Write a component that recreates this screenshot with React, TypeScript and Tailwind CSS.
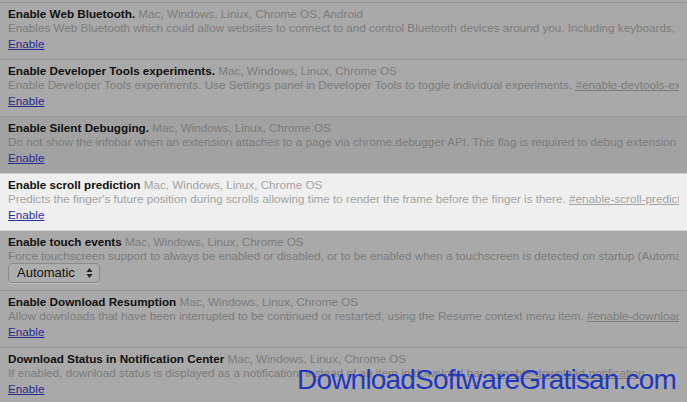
import React from 'react';

type Flag = {
  title: string;
  desc: string;
  hash?: string;
  select?: boolean;
  tone?: 'dark' | 'light';
};

const platforms = 'Mac, Windows, Linux, Chrome OS';

const flags: Flag[] = [
  {
    title: 'Enable Web Bluetooth.',
    desc: 'Enables Web Bluetooth which could allow websites to connect to and control Bluetooth devices around you. Including keyboards, mice and more',
  },
  {
    title: 'Enable Developer Tools experiments.',
    desc: 'Enable Developer Tools experiments. Use Settings panel in Developer Tools to toggle individual experiments. ',
    hash: '#enable-devtools-experiments',
  },
  {
    title: 'Enable Silent Debugging.',
    desc: 'Do not show the infobar when an extension attaches to a page via chrome.debugger API. This flag is required to debug extension background pages.',
    tone: 'dark',
  },
  {
    title: 'Enable scroll prediction',
    desc: "Predicts the finger's future position during scrolls allowing time to render the frame before the finger is there. ",
    hash: '#enable-scroll-prediction',
    tone: 'light',
  },
  {
    title: 'Enable touch events',
    desc: 'Force touchscreen support to always be enabled or disabled, or to be enabled when a touchscreen is detected on startup (Automatic, the default).',
    select: true,
  },
  {
    title: 'Enable Download Resumption',
    desc: 'Allow downloads that have been interrupted to be continued or restarted, using the Resume context menu item. ',
    hash: '#enable-download-resumption',
  },
  {
    title: 'Download Status in Notification Center',
    desc: 'If enabled, download status is displayed as a notification, instead of an item in download bar. ',
    hash: '#enable-download-notification',
  },
];

function FlagRow({ flag }: { flag: Flag }) {
  const light = flag.tone === 'light';
  const bg = light
    ? 'bg-[#efefef] border-b-[#d6d6d6]'
    : flag.tone === 'dark'
      ? 'bg-[#a2a2a2] border-b-[#cfcfcf]'
      : 'bg-[#a9a9a9] border-b-[#979797]';
  const muted = light ? 'text-[#a3a3a3]' : 'text-[#7c7c7c]';
  const link = light ? 'text-[#2c2ca6]' : 'text-[#2a2a8e]';

  return (
    <div className={`border-b px-[8px] pt-[4px] ${flag.select ? 'pb-[7px]' : 'pb-[8px]'} ${bg}`}>
      <div className="h-[14px] whitespace-nowrap text-[11.7px] leading-[14px]">
        <span className="font-bold text-[#111]">{flag.title}</span>{' '}
        <span className={muted}>{flag.title === 'Enable Web Bluetooth.' ? platforms + ', Android' : platforms}</span>
      </div>
      <div className={`h-[14px] overflow-hidden whitespace-nowrap text-[11.7px] leading-[14px] ${muted}`}>
        {flag.desc}
        {flag.hash && <span className="underline">{flag.hash}</span>}
      </div>
      {flag.select ? (
        <div className="flex h-[20px] w-[92px] items-center justify-between rounded-[4px] border border-[#8a8a8a] bg-[#adadad] pl-[8px] pr-[6px] text-[13px] text-[#111] shadow-[0_1px_0_#bdbdbd]">
          <span>Automatic</span>
          <svg width="7" height="12" viewBox="0 0 7 12">
            <path d="M3.5 1 L6.5 5 H0.5 Z" fill="#222" />
            <path d="M3.5 11 L6.5 7 H0.5 Z" fill="#222" />
          </svg>
        </div>
      ) : (
        <div className="mt-[2px] h-[14px] text-[11.7px] leading-[14px]">
          <a className={`underline ${link}`}>Enable</a>
        </div>
      )}
    </div>
  );
}

export default function App() {
  return (
    <div className="relative h-[402px] w-[687px] overflow-hidden bg-[#a9a9a9] font-['Liberation_Sans',Arial,sans-serif]">
      <div className="h-[3px] border-b border-[#979797]" />
      {flags.map((f) => (
        <FlagRow key={f.title} flag={f} />
      ))}
      <div className="absolute left-[297px] top-[364px] whitespace-nowrap text-[28px] leading-[32px] tracking-[-0.8px] text-[#2137c2]">
        DownloadSoftwareGratisan.com
      </div>
    </div>
  );
}
